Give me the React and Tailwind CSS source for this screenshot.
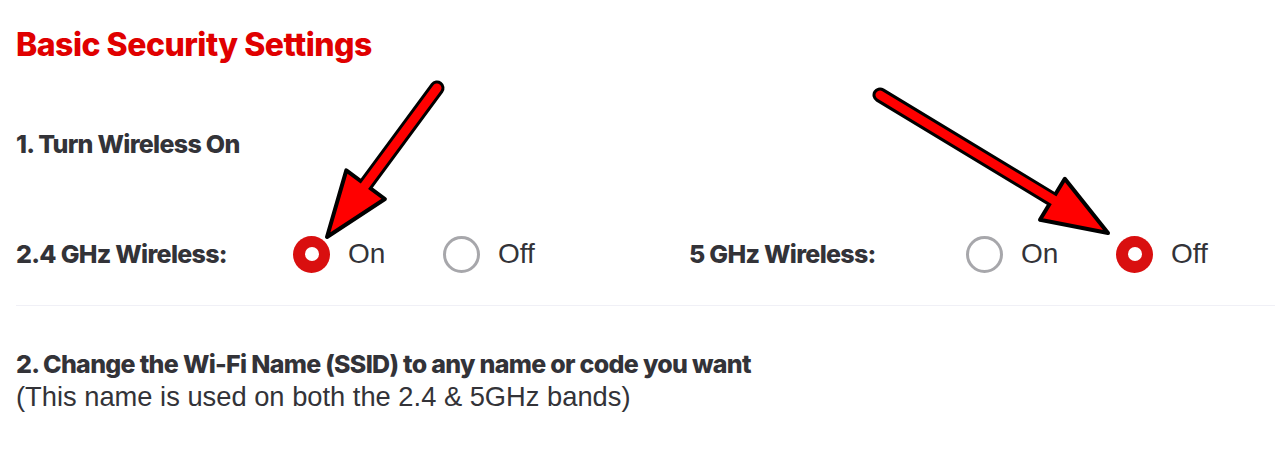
import React from "react";

const BOLD = { fontFamily: 'Inter, "Liberation Sans", Arial, sans-serif' };

function Radio({ checked }) {
  return checked ? (
    <span className="flex h-[37px] w-[37px] shrink-0 items-center justify-center rounded-full bg-[#d90f0f]">
      <span className="h-[14px] w-[14px] rounded-full bg-white" />
    </span>
  ) : (
    <span className="h-[37px] w-[37px] shrink-0 rounded-full border-[3px] border-[#a7a7ab] bg-white" />
  );
}

function Option({ label, checked }) {
  return (
    <div className="flex w-[150px] items-center gap-[18px]">
      <Radio checked={checked} />
      <span className="text-[28px] leading-[28px] text-[#333338]">{label}</span>
    </div>
  );
}

function Group({ label, on }) {
  return (
    <div className="flex items-center">
      <div className="w-[277px] text-[25px] font-extrabold leading-[30px] tracking-[-0.7px] text-[#333338]" style={BOLD}>
        {label}
      </div>
      <Option label="On" checked={on} />
      <Option label="Off" checked={!on} />
    </div>
  );
}

function Arrows() {
  const arrows = [
    { t: [437, 88], m: [365.6, 184.7], p: [327, 237], a: [384.9, 199.0], b: [346.3, 170.4] },
    { t: [880, 95], m: [1052.4, 199.3], p: [1108, 233], a: [1040, 219.8], b: [1064.8, 178.8] },
  ];
  return (
    <svg className="pointer-events-none absolute left-0 top-0" width="1275" height="450" viewBox="0 0 1275 450">
      {arrows.map((r, i) => (
        <g key={i}>
          <line x1={r.t[0]} y1={r.t[1]} x2={r.m[0]} y2={r.m[1]} stroke="#000" strokeWidth="15" strokeLinecap="round" />
          <polygon
            points={`${r.a[0]},${r.a[1]} ${r.p[0]},${r.p[1]} ${r.b[0]},${r.b[1]}`}
            fill="#ff0000"
            stroke="#000"
            strokeWidth="4"
            strokeLinejoin="round"
          />
          <line
            x1={r.t[0]}
            y1={r.t[1]}
            x2={(r.m[0] * 3 + r.p[0]) / 4}
            y2={(r.m[1] * 3 + r.p[1]) / 4}
            stroke="#ff0000"
            strokeWidth="9"
            strokeLinecap="round"
          />
        </g>
      ))}
    </svg>
  );
}

export default function App() {
  return (
    <div
      className="relative h-[450px] w-[1275px] overflow-hidden bg-white"
      style={{ fontFamily: '"Liberation Sans", Arial, sans-serif' }}
    >
      <div className="px-4 pt-[27px]">
        <h1 className="text-[32px] font-extrabold leading-[36px] tracking-[-0.5px] text-[#e00000]" style={BOLD}>
          Basic Security Settings
        </h1>
        <div className="mt-[66px] text-[25px] font-extrabold leading-[30px] tracking-[-0.7px] text-[#333338]" style={BOLD}>
          1. Turn Wireless On
        </div>
      </div>
      <div className="ml-4 mt-[70px] flex h-[50px] items-center">
        <div className="w-[673px]">
          <Group label="2.4 GHz Wireless:" on={true} />
        </div>
        <Group label="5 GHz Wireless:" on={false} />
      </div>
      <div className="ml-4 mt-[26px] h-px bg-[#f0f0f6]" />
      <div className="px-4 pt-[44px] text-[#333338]">
        <div className="text-[25px] font-extrabold leading-[28px] tracking-[-0.7px]" style={BOLD}>
          2. Change the Wi-Fi Name (SSID) to any name or code you want
        </div>
        <div className="mt-[4px] text-[27.3px] leading-[30px]">(This name is used on both the 2.4 &amp; 5GHz bands)</div>
      </div>
      <Arrows />
    </div>
  );
}
